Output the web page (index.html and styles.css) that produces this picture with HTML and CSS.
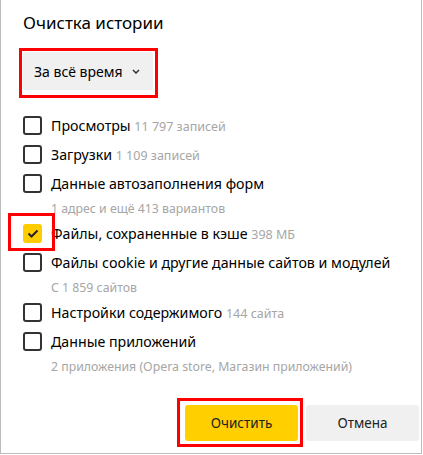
FILE: index.html
```html
<!DOCTYPE html>
<html lang="ru">
<head>
<meta charset="UTF-8" />
<title>Очистка истории</title>
<link rel="stylesheet" href="styles.css">
</head>
<body>

<div class="dialog">
  <h1 class="title">Очистка истории</h1>

  <button class="period marked">За всё время
    <svg class="chevron" width="8" height="5" viewBox="0 0 8 5"><polyline points="1,1 4,4 7,1" fill="none" stroke="#333" stroke-width="1.5"/></svg>
  </button>

  <ul class="items">
    <li class="item">
      <span class="box"></span>
      <div class="text"><span class="name">Просмотры</span> <span class="count">11 797 записей</span></div>
    </li>
    <li class="item">
      <span class="box"></span>
      <div class="text"><span class="name">Загрузки</span> <span class="count">1 109 записей</span></div>
    </li>
    <li class="item">
      <span class="box"></span>
      <div class="text"><span class="name">Данные автозаполнения форм</span>
        <div class="sub">1 адрес и ещё 413 вариантов</div></div>
    </li>
    <li class="item">
      <span class="box checked marked">
        <svg width="12" height="9" viewBox="0 0 12 9"><polyline points="1.5,4.5 4.5,7.5 10.5,1.5" fill="none" stroke="#222" stroke-width="2"/></svg>
      </span>
      <div class="text"><span class="name">Файлы, сохраненные в кэше</span> <span class="count">398 МБ</span></div>
    </li>
    <li class="item">
      <span class="box"></span>
      <div class="text"><span class="name">Файлы cookie и другие данные сайтов и модулей</span>
        <div class="sub">С 1 859 сайтов</div></div>
    </li>
    <li class="item">
      <span class="box"></span>
      <div class="text"><span class="name">Настройки содержимого</span> <span class="count">144 сайта</span></div>
    </li>
    <li class="item">
      <span class="box"></span>
      <div class="text"><span class="name">Данные приложений</span>
        <div class="sub">2 приложения (Opera store, Магазин приложений)</div></div>
    </li>
  </ul>

  <div class="actions">
    <button class="btn btn-clear marked">Очистить</button>
    <button class="btn btn-cancel">Отмена</button>
  </div>
</div>

</body>
</html>
```

FILE: styles.css
```css
body {
  margin: 0;
  background: #fff;
  font-family: "Noto Sans", "Open Sans", sans-serif;
  color: #000;
}
.dialog {
  width: 422px;
  height: 454px;
  box-sizing: border-box;
  border: 1px solid #bcbcbc;
  border-top: none;
  padding: 11px 2px 0 22px;
  display: flex;
  flex-direction: column;
}
.title {
  font-size: 17px;
  font-weight: 400;
  margin: 0;
  line-height: 24px;
}
.period {
  position: relative;
  align-self: flex-start;
  margin-top: 17px;
  height: 38px;
  padding: 0 13px 0 11px;
  border: none;
  border-radius: 3px;
  background: #f0f0f0;
  font-family: inherit;
  font-size: 14px;
  color: #000;
  display: flex;
  align-items: center;
  gap: 10px;
}
.marked::after {
  content: "";
  position: absolute;
  border: 3px solid #ff0000;
  pointer-events: none;
}
.period::after {
  left: -4px;
  top: -4px;
  right: -5px;
  bottom: -8px;
}
.items {
  list-style: none;
  margin: 26px 0 0;
  padding: 0;
}
.item {
  display: flex;
  align-items: flex-start;
  gap: 9px;
  min-height: 29px;
}
.box {
  position: relative;
  flex: none;
  width: 19px;
  height: 19px;
  box-sizing: border-box;
  border: 2px solid #333;
  border-radius: 3px;
}
.box.checked {
  border: none;
  background: #ffcc00;
  display: flex;
  align-items: center;
  justify-content: center;
}
.box.checked::after {
  left: -15px;
  top: -11px;
  width: 47px;
  height: 38px;
  box-sizing: border-box;
}
.text {
  font-size: 14.2px;
  line-height: 19px;
}
.count {
  font-size: 12.5px;
  color: #a6a6a6;
}
.sub {
  font-size: 12.3px;
  color: #a6a6a6;
  margin-top: 9px;
  line-height: 14px;
  margin-bottom: 8px;
}
.actions {
  margin-top: auto;
  margin-bottom: 12px;
  display: flex;
  justify-content: flex-end;
  gap: 8px;
}
.btn {
  width: 113px;
  height: 36px;
  border: none;
  border-radius: 3px;
  font-family: inherit;
  font-size: 13.5px;
  color: #222;
}
.btn-clear {
  position: relative;
  background: #ffcf00;
}
.btn-clear::after {
  left: -8px;
  top: -7px;
  right: -5px;
  bottom: -6px;
}
.btn-cancel {
  background: #f0f0f0;
}
```
